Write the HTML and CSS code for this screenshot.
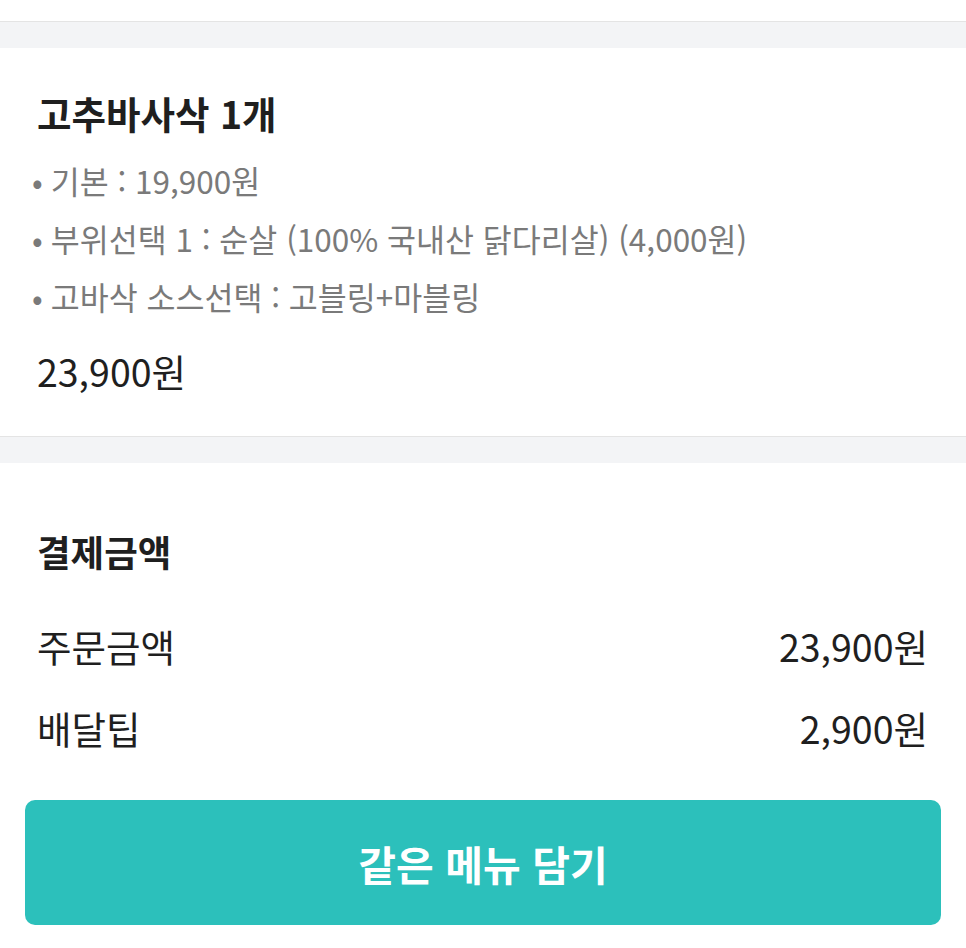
FILE: index.html
```html
<!DOCTYPE html>
<html lang="ko">
<head>
  <meta charset="UTF-8" />
  <meta name="viewport" content="width=device-width, initial-scale=1.0"/>
  <title>주문 상세</title>
  <link rel="stylesheet" href="styles.css">
</head>
<body>
  <div class="top-strip"></div>
  <div class="spacer"></div>

  <section class="item">
    <h2 class="item-title">고추바사삭 1개</h2>
    <ul class="options">
      <li>기본 : 19,900원</li>
      <li>부위선택 1 : 순살 (100% 국내산 닭다리살) (4,000원)</li>
      <li>고바삭 소스선택 : 고블링+마블링</li>
    </ul>
    <div class="item-price">23,900원</div>
  </section>

  <div class="spacer"></div>

  <section class="payment">
    <h2 class="payment-title">결제금액</h2>
    <div class="row">
      <span>주문금액</span>
      <span>23,900원</span>
    </div>
    <div class="row">
      <span>배달팁</span>
      <span>2,900원</span>
    </div>
    <button class="again-btn">같은 메뉴 담기</button>
  </section>
</body>
</html>
```

FILE: styles.css
```css
:root {
  --text: #1f1f1f;
  --sub: #7a7a7a;
  --line: #e4e4e4;
  --band: #f3f4f6;
  --mint: #2cc0bb;
}

* {
  box-sizing: border-box;
}

body {
  margin: 0;
  background: #fff;
  color: var(--text);
  font-family: "Noto Sans CJK KR", "Noto Sans", sans-serif;
}

.top-strip {
  height: 22px;
  border-bottom: 1px solid var(--line);
}

.spacer {
  height: 26px;
  background: var(--band);
}

.item {
  padding: 40px 40px 40px 37px;
  border-bottom: 1px solid var(--line);
}

.item-title {
  margin: 0;
  font-size: 37.5px;
  font-weight: 700;
  line-height: 50px;
}

.options {
  list-style: none;
  margin: 13px 0 0;
  padding: 0;
  color: var(--sub);
  font-size: 31.5px;
  line-height: 58px;
}

.options li::before {
  content: '•';
  margin: 0 8px 0 -5px;
}

.item-price {
  margin-top: 21px;
  font-size: 37.5px;
  line-height: 50px;
}

.payment {
  padding: 64px 0 0;
}

.payment-title {
  margin: 0 40px 0 37px;
  font-size: 36.5px;
  font-weight: 700;
  line-height: 50px;
}

.row {
  display: flex;
  justify-content: space-between;
  margin: 44px 38px 0 37px;
  font-size: 37.5px;
  line-height: 50px;
}

.row + .row {
  margin-top: 32px;
}

.again-btn {
  display: block;
  width: calc(100% - 50px);
  height: 125px;
  margin: 47px 25px 0;
  border: none;
  border-radius: 10px;
  background: var(--mint);
  color: #fff;
  font-family: inherit;
  font-size: 41px;
  font-weight: 700;
  cursor: pointer;
}
```
